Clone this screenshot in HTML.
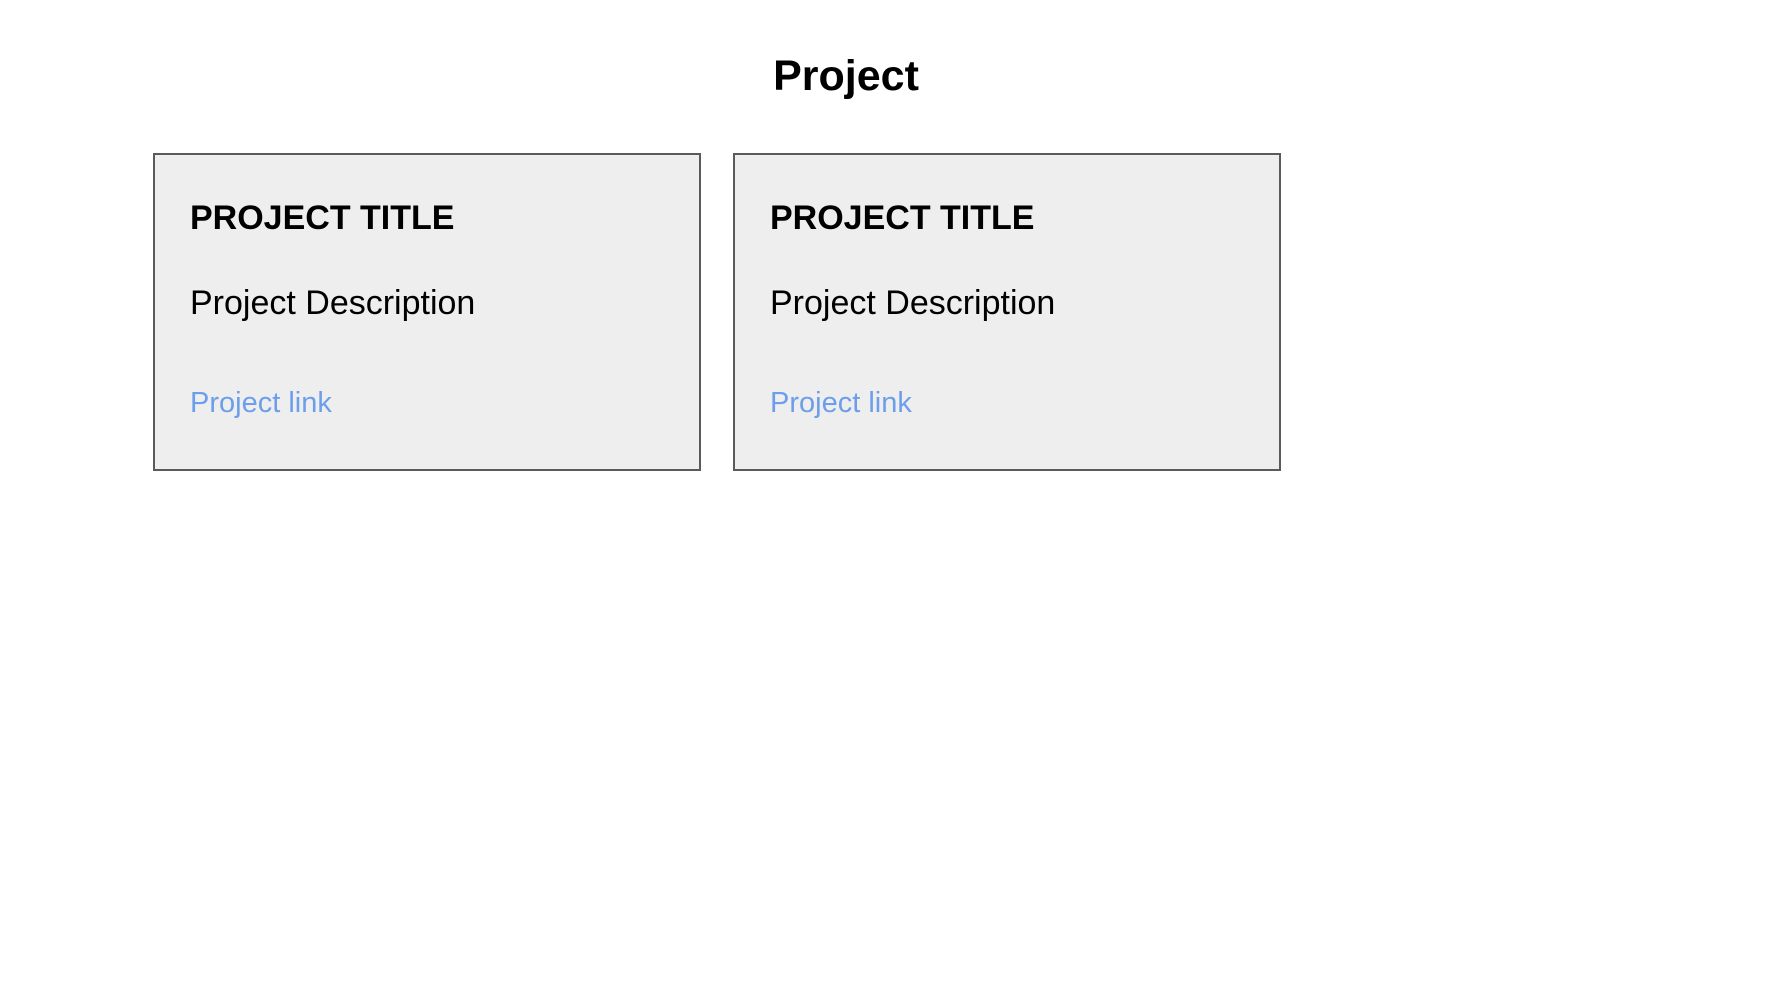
<!DOCTYPE html>
<html><head><meta charset="utf-8"><style>
html,body{margin:0;padding:0;background:#fff;width:1768px;height:996px;overflow:hidden;font-family:"Liberation Sans",Arial,sans-serif;}
h1{position:absolute;left:0;width:1692px;top:51px;margin:0;text-align:center;font-size:43px;font-weight:bold;line-height:50px;color:#000;}
.card{position:absolute;top:153px;width:548px;height:318px;border:2px solid #5a5a5a;background:#eeeeee;box-sizing:border-box;}
.card .t{position:absolute;left:35px;top:43px;font-size:34px;font-weight:bold;line-height:40px;white-space:nowrap;color:#000;}
.card .d{position:absolute;left:35px;top:128px;font-size:34px;line-height:40px;white-space:nowrap;color:#000;}
.card .l{position:absolute;left:35px;top:231px;font-size:29px;line-height:34px;white-space:nowrap;color:#6d9eeb;text-decoration:none;}
</style></head><body>
<h1>Project</h1>
<div class="card" style="left:153px"><div class="t">PROJECT TITLE</div><div class="d">Project Description</div><a class="l">Project link</a></div>
<div class="card" style="left:733px"><div class="t">PROJECT TITLE</div><div class="d">Project Description</div><a class="l">Project link</a></div>
</body></html>
